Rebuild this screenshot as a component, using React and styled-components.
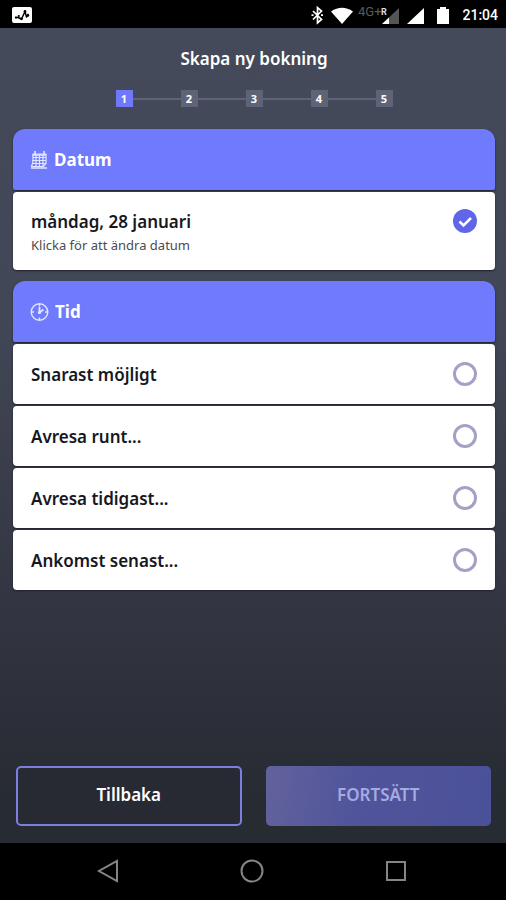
import { useState } from "react";
import styled, { createGlobalStyle } from "styled-components";

const GlobalStyle = createGlobalStyle`
  * {
    box-sizing: border-box;
  }
  body {
    margin: 0;
    background: #000;
    font-family: "Noto Sans", "Open Sans", sans-serif;
  }
  button, input {
    font-family: inherit;
    margin: 0;
  }
`;

const Screen = styled.div`
  display: flex;
  flex-direction: column;
  min-height: 100vh;
`;

const StatusBar = styled.div`
  display: flex;
  align-items: center;
  justify-content: space-between;
  height: 28px;
  padding: 2px 8px 0 12px;
  background: #000;
  color: #fff;
`;

const StatusIcons = styled.div`
  display: flex;
  align-items: center;
`;

const Clock = styled.time`
  margin-left: 10px;
  font-family: Roboto, sans-serif;
  font-size: 14px;
  font-weight: 500;
  line-height: 20px;
`;

const Content = styled.main`
  flex: 1;
  display: flex;
  flex-direction: column;
  padding: 18px 11px 17px 13px;
  background: linear-gradient(#444a5a, #424757 35%, #31333f 75%, #272b32 95%);
`;

const Title = styled.h1`
  margin: 0;
  color: #fff;
  font-size: 17px;
  font-weight: 600;
  line-height: 26px;
  text-align: center;
`;

const Steps = styled.ol`
  display: flex;
  align-items: center;
  align-self: center;
  margin: 18px 0 22px;
  padding: 0;
  list-style: none;
`;

const Step = styled.li`
  display: flex;
  align-items: center;
  color: #fff;
  font-size: 11px;
  font-weight: 700;
  line-height: 17px;

  & + &::before {
    content: "";
    width: 48px;
    height: 2px;
    background: #5f6378;
  }
`;

const StepNumber = styled.span`
  width: 17px;
  height: 17px;
  background: ${(props) => (props.$active ? "#6f78fb" : "#5f6378")};
  text-align: center;
`;

const Card = styled.section`
  display: flex;
  flex-direction: column;
  gap: 2px;
  margin-bottom: 11px;
`;

const CardHeader = styled.h2`
  display: flex;
  align-items: center;
  gap: 6px;
  height: 61px;
  margin: 0;
  padding: 0 17px;
  border-radius: 12px 12px 2px 2px;
  background: #6f7afc;
  box-shadow: 0 1px 2px #1f212c;
  color: #fff;
  font-size: 17px;
  font-weight: 700;
`;

const DateRow = styled.button`
  display: flex;
  align-items: flex-start;
  justify-content: space-between;
  width: 100%;
  height: 78px;
  padding: 17px 18px;
  border: 0;
  border-radius: 4px;
  background: #fff;
  box-shadow: 0 1px 2px #1f212c;
  color: #17181f;
  text-align: left;
`;

const RowTitle = styled.span`
  display: block;
  font-size: 17px;
  font-weight: 600;
  line-height: 25px;
`;

const RowHint = styled.span`
  display: block;
  color: #4b4b52;
  font-size: 13px;
  line-height: 22px;
`;

const Option = styled.label`
  display: flex;
  align-items: center;
  justify-content: space-between;
  height: 60px;
  padding: 0 18px;
  border-radius: 4px;
  background: #fff;
  box-shadow: 0 1px 2px #1f212c;
  color: #17181f;
`;

const Radio = styled.input`
  appearance: none;
  width: 24px;
  height: 24px;
  border: 3px solid #a3a2c6;
  border-radius: 50%;

  &:checked {
    border: 7px solid #6068e8;
  }
`;

const Actions = styled.div`
  display: grid;
  grid-template-columns: 1fr 1fr;
  gap: 24px;
  margin-top: auto;
  padding: 0 4px 0 3px;
`;

const ActionButton = styled.button`
  height: 60px;
  padding: 0 0 3px;
  border-radius: 5px;
  font-size: 17px;
  font-weight: 600;
`;

const BackButton = styled(ActionButton)`
  border: 2px solid #7a7fe0;
  background: #272a33;
  color: #fff;
`;

const NextButton = styled(ActionButton)`
  border: 0;
  background: linear-gradient(100deg, #62629c, #50549a 40%, #4b5199);
  color: #a5aae0;
`;

const NavBar = styled.nav`
  display: flex;
  align-items: center;
  justify-content: space-between;
  height: 57px;
  padding: 0 98px 2px 96px;
  background: #000;
`;

const NavButton = styled.button`
  display: flex;
  padding: 0;
  border: 0;
  background: none;
`;

const ActivityIcon = () => (
  <svg width="20" height="16" viewBox="0 0 20 16">
    <rect width="20" height="16" rx="2" fill="#fff" />
    <path
      d="M3 10.500h3l3.500 1.500L13 4.500l1.500 5.500 2-3"
      fill="none"
      stroke="#000"
      strokeWidth="1.5"
      strokeLinejoin="round"
    />
    <circle cx="4" cy="10.500" r="1.100" />
    <circle cx="6.800" cy="9" r="1.100" />
    <circle cx="9.500" cy="11.800" r="1.400" />
    <circle cx="13" cy="4.500" r="1.400" />
    <circle cx="16" cy="8.500" r="1.200" />
  </svg>
);

const SignalIcons = () => (
  <svg width="141" height="24" viewBox="0 0 141 24">
    {/* bluetooth */}
    <path
      d="M2 8l8.500 8.500L6.500 20V4.500l4 3.500L2 16.500"
      fill="none"
      stroke="#fff"
      strokeWidth="1.7"
    />
    <path d="M0.500 12.200h2M10 12.200h2" stroke="#fff" strokeWidth="1.7" />
    {/* wifi */}
    <path d="M20 8.500Q31 1 42 8.500L31 21z" fill="#fff" />
    <text x="47" y="13" fill="#5b5b5b" fontFamily="Roboto, sans-serif" fontSize="13">
      4G+
    </text>
    {/* roaming sim */}
    <path d="M88 5v16H71z" fill="#555" />
    <path d="M78 14.500V21h-7z" fill="#fff" />
    <text
      x="70"
      y="12"
      fill="#ddd"
      fontFamily="Roboto, sans-serif"
      fontSize="9"
      fontWeight="700"
    >
      R
    </text>
    {/* second sim */}
    <path d="M113 5v16H96z" fill="#fff" />
    {/* battery */}
    <path d="M126 6h3V4h6v2h3v15h-12z" fill="#fff" />
  </svg>
);

const CalendarIcon = () => (
  <svg width="18" height="20" viewBox="0 0 18 20">
    <path
      d="M3 4h13v9.500l-2.500 3H1.500L3 12zM2.500 7.500H16M2 10.500h14M2 13.500h14M6 4v12M9.500 4v12M13 4v12"
      fill="none"
      stroke="#e4e6ff"
      strokeWidth="1.2"
    />
    <path
      d="M2.500 5H16M5 1v4M14 1v4M1 18h16"
      fill="none"
      stroke="#e4e6ff"
      strokeWidth="1.700"
    />
  </svg>
);

const ClockIcon = () => (
  <svg width="19" height="20" viewBox="0 0 19 20">
    <g fill="none" stroke="#e4e6ff" strokeWidth="1.400">
      <circle cx="9.500" cy="10" r="8.300" />
      <path d="M9.500 2v2.500M9.500 15.500V18M1.500 10H4M15 10h2.500" />
      <path d="M9.500 5v5.500l4-3" strokeWidth="1.800" />
    </g>
    <circle cx="9.500" cy="10.500" r="1.600" fill="#e4e6ff" />
  </svg>
);

const CheckIcon = () => (
  <svg width="24" height="24" viewBox="0 0 24 24">
    <circle cx="12" cy="12" r="12" fill="#5f66e8" />
    <path d="M6.500 12.500l4 4L18 9" fill="none" stroke="#fff" strokeWidth="2.600" />
  </svg>
);

const times = [
  "Snarast möjligt",
  "Avresa runt...",
  "Avresa tidigast...",
  "Ankomst senast...",
];

const App = () => {
  const [time, setTime] = useState(null);
  return (
    <Screen>
      <GlobalStyle />
      <StatusBar>
        <ActivityIcon />
        <StatusIcons>
          <SignalIcons />
          <Clock>21:04</Clock>
        </StatusIcons>
      </StatusBar>
      <Content>
        <Title>Skapa ny bokning</Title>
        <Steps>
          {[1, 2, 3, 4, 5].map((n) => (
            <Step key={n}>
              <StepNumber $active={n === 1}>{n}</StepNumber>
            </Step>
          ))}
        </Steps>
        <Card>
          <CardHeader>
            <CalendarIcon />
            Datum
          </CardHeader>
          <DateRow type="button">
            <span>
              <RowTitle>måndag, 28 januari</RowTitle>
              <RowHint>Klicka för att ändra datum</RowHint>
            </span>
            <CheckIcon />
          </DateRow>
        </Card>
        <Card>
          <CardHeader>
            <ClockIcon />
            Tid
          </CardHeader>
          {times.map((t) => (
            <Option key={t}>
              <RowTitle>{t}</RowTitle>
              <Radio
                type="radio"
                name="time"
                checked={time === t}
                onChange={() => setTime(t)}
              />
            </Option>
          ))}
        </Card>
        <Actions>
          <BackButton type="button">Tillbaka</BackButton>
          <NextButton type="button" disabled={!time}>
            FORTSÄTT
          </NextButton>
        </Actions>
      </Content>
      <NavBar>
        <NavButton type="button" aria-label="Back">
          <svg width="24" height="24" viewBox="0 0 24 24">
            <path d="M21 2v20L3 12z" fill="none" stroke="#858585" strokeWidth="2" />
          </svg>
        </NavButton>
        <NavButton type="button" aria-label="Home">
          <svg width="24" height="24" viewBox="0 0 24 24">
            <circle cx="12" cy="12" r="10.500" fill="none" stroke="#858585" strokeWidth="2" />
          </svg>
        </NavButton>
        <NavButton type="button" aria-label="Recent">
          <svg width="24" height="24" viewBox="0 0 24 24">
            <path d="M3 3h18v18H3z" fill="none" stroke="#858585" strokeWidth="2" />
          </svg>
        </NavButton>
      </NavBar>
    </Screen>
  );
};

export default App;
